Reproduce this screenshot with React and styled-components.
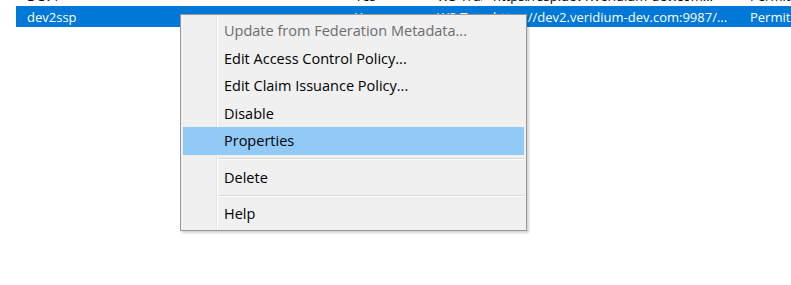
import React from 'react'
import styled, { createGlobalStyle } from 'styled-components'

const GlobalStyle = createGlobalStyle`
    html, body {
        margin: 0;
        padding: 0;
        background: #fff;
        overflow: hidden;
    }
    body {
        font-family: "Open Sans", "Liberation Sans", sans-serif;
    }
`

const rows = [
    { name: 'DCV1', enabled: 'Yes', type: 'WS-Trust', url: 'https://ssp.dev1.veridium-dev.com...', policy: 'Permit everyone' },
    { name: 'dev2ssp', enabled: 'Yes', type: 'WS-Trust', url: 'https://dev2.veridium-dev.com:9987/...', policy: 'Permit everyone', selected: true },
]

const menuGroups = [
    [
        { label: 'Update from Federation Metadata...', disabled: true },
        { label: 'Edit Access Control Policy...' },
        { label: 'Edit Claim Issuance Policy...' },
        { label: 'Disable' },
        { label: 'Properties', active: true },
    ],
    [{ label: 'Delete' }],
    [{ label: 'Help' }],
]

const App = () => {
    return (
        <>
            <GlobalStyle />
            <Page>
                <Table>
                    {rows.map((row, index) => (
                        <Row key={index} selected={row.selected}>
                            <Cell>{row.name}</Cell>
                            <Cell>{row.enabled}</Cell>
                            <Cell>{row.type}</Cell>
                            <Cell>{row.url}</Cell>
                            <Cell>{row.policy}</Cell>
                        </Row>
                    ))}
                </Table>

                <Menu>
                    {menuGroups.map((group, gi) => (
                        <React.Fragment key={gi}>
                            {gi > 0 && <Separator />}
                            {group.map((item) => (
                                <MenuItem key={item.label} disabled={item.disabled} active={item.active}>
                                    {item.label}
                                </MenuItem>
                            ))}
                        </React.Fragment>
                    ))}
                </Menu>
            </Page>
        </>
    )
}

export default App

const Page = styled.div`
    position: relative;
    width: 791px;
    height: 285px;
    overflow: hidden;
`

const Table = styled.div`
    display: flex;
    flex-direction: column;
    margin-top: -15px;
    padding-left: 16px;
`

const Row = styled.div`
    display: grid;
    grid-template-columns: 328px 82px 56px 257px 1fr;
    height: 21px;
    align-items: center;
    background: ${props => props.selected ? '#0078d7' : 'transparent'};
    color: ${props => props.selected ? '#fff' : '#000'};
    font-size: 13px;
    white-space: nowrap;
    overflow: hidden;
`

const Cell = styled.div`
    padding-left: 11px;
    overflow: hidden;
`

const Menu = styled.div`
    position: absolute;
    left: 180px;
    top: 14px;
    width: 341px;
    padding: 2px;
    background: #f0f0f0;
    border: 1px solid #979797;
    box-shadow: 2px 2px 2px rgba(0, 0, 0, 0.18);
    background-image: linear-gradient(to right, transparent 35px, #e2e3e3 35px, #e2e3e3 36px, #fff 36px, #fff 37px, transparent 37px);
`

const MenuItem = styled.div`
    height: 27.5px;
    display: flex;
    align-items: center;
    padding-left: 40px;
    font-size: 14.5px;
    color: ${props => props.disabled ? '#6d6d6d' : '#000'};
    background: ${props => props.active ? '#91c9f7' : 'transparent'};
    border: 1px solid ${props => props.active ? '#91c9f7' : 'transparent'};
    box-sizing: border-box;
`

const Separator = styled.div`
    height: 9px;
    margin-left: 36px;
    display: flex;
    align-items: center;

    &::after{
        content: '';
        flex: 1;
        height: 1px;
        background: #d7d7d7;
        border-bottom: 1px solid #fff;
    }
`
